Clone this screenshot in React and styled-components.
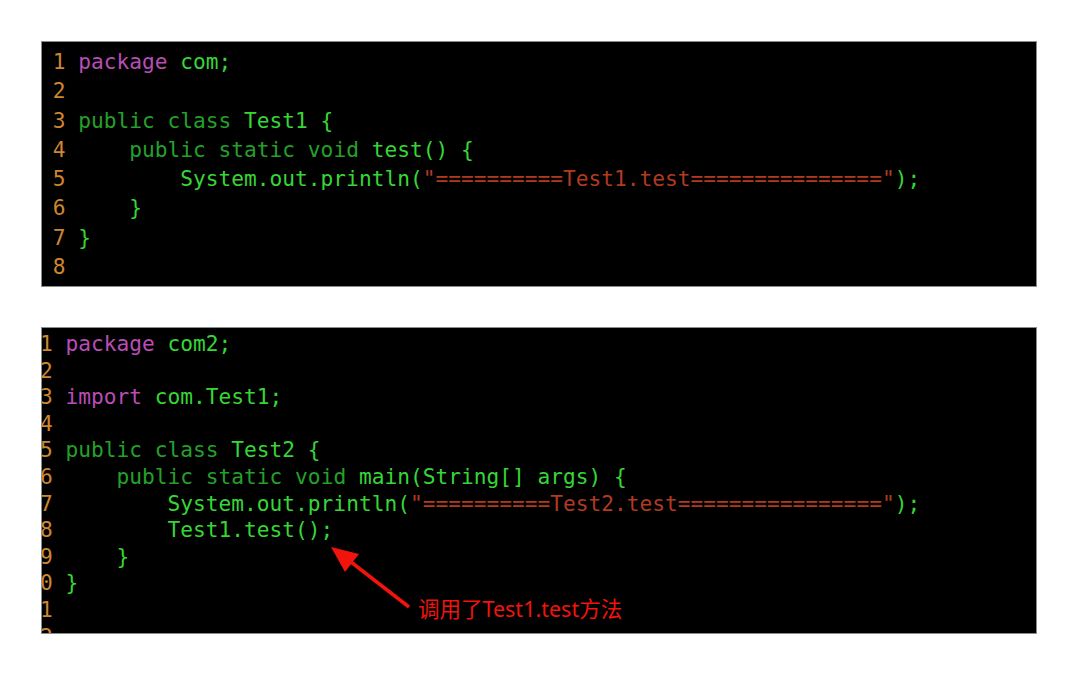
import React from 'react'
import styled, { createGlobalStyle } from 'styled-components';

const GlobalStyle = createGlobalStyle`
    body {
        margin: 0;
        background: #ffffff;
    }
`;

// token colours taken from the editor theme
const colors = {
    num: '#cf8631',
    kw: '#b84db8',
    mod: '#24a02a',
    text: '#36d636',
    str: '#b23a20',
};

const firstFile = [
    [['kw', 'package'], ['text', ' com;']],
    [],
    [['mod', 'public class '], ['text', 'Test1 {']],
    [['text', '    '], ['mod', 'public static void '], ['text', 'test() {']],
    [['text', '        System.out.println('], ['str', '"==========Test1.test==============="'], ['text', ');']],
    [['text', '    }']],
    [['text', '}']],
    [],
    [],
];

const secondFile = [
    [['kw', 'package'], ['text', ' com2;']],
    [],
    [['kw', 'import'], ['text', ' com.Test1;']],
    [],
    [['mod', 'public class '], ['text', 'Test2 {']],
    [['text', '    '], ['mod', 'public static void '], ['text', 'main(String[] args) {']],
    [['text', '        System.out.println('], ['str', '"==========Test2.test================"'], ['text', ');']],
    [['text', '        Test1.test();']],
    [['text', '    }']],
    [['text', '}']],
    [],
    [],
];

const CodeLines = ({ lines }) => (
    <>
        {lines.map((tokens, i) => (
            <Line key={i}>
                <Gutter>{i + 1}</Gutter>
                <Code>
                    {tokens.map(([kind, value], j) => (
                        <Token key={j} $kind={kind}>{value}</Token>
                    ))}
                </Code>
            </Line>
        ))}
    </>
);

const App = () => {
    return (
        <Page>
            <GlobalStyle />
            <Panel $height={246}>
                <Listing $lineHeight={29.3} $top={5} $shift="-2px">
                    <CodeLines lines={firstFile} />
                </Listing>
            </Panel>
            <Panel $height={307}>
                <Listing $lineHeight={26.6} $top={3} $shift="calc(-1ch - 2px)">
                    <CodeLines lines={secondFile} />
                </Listing>
                <Arrow viewBox="0 0 996 307">
                    <line x1="367" y1="279" x2="309" y2="234" stroke="#f0140c" strokeWidth="3.5" />
                    <polygon points="289,219 317,226 303,244" fill="#f0140c" />
                </Arrow>
                <Note>调用了Test1.test方法</Note>
            </Panel>
        </Page>
    )
}

export default App

const Page = styled.div`
    display: flex;
    flex-direction: column;
    gap: 40px;
    padding: 41px 0 0 41px;
`;

const Panel = styled.div`
    position: relative;
    box-sizing: border-box;
    width: 996px;
    height: ${({ $height }) => $height}px;
    background: #000;
    border: 1px solid #8c8c8c;
    overflow: hidden;
`;

const Listing = styled.div`
    display: flex;
    flex-direction: column;
    padding-top: ${({ $top }) => $top}px;
    margin-left: ${({ $shift }) => $shift};
    font-family: "DejaVu Sans Mono", monospace;
    font-size: 21.2px;
    line-height: ${({ $lineHeight }) => $lineHeight}px;
`;

const Line = styled.div`
    display: flex;
    height: 1lh;
    white-space: pre;
`;

const Gutter = styled.span`
    width: 2ch;
    margin-right: 1ch;
    text-align: right;
    color: ${colors.num};
    flex-shrink: 0;
`;

const Code = styled.span`
    white-space: pre;
`;

const Token = styled.span`
    color: ${({ $kind }) => colors[$kind]};
`;

const Arrow = styled.svg`
    position: absolute;
    left: 0;
    top: 0;
    width: 996px;
    height: 307px;
    pointer-events: none;
`;

const Note = styled.div`
    position: absolute;
    left: 376px;
    top: 269px;
    font-family: "Noto Sans", "Noto Sans CJK SC", sans-serif;
    font-size: 21.5px;
    line-height: 24px;
    color: #f0140c;
    white-space: nowrap;
`;
